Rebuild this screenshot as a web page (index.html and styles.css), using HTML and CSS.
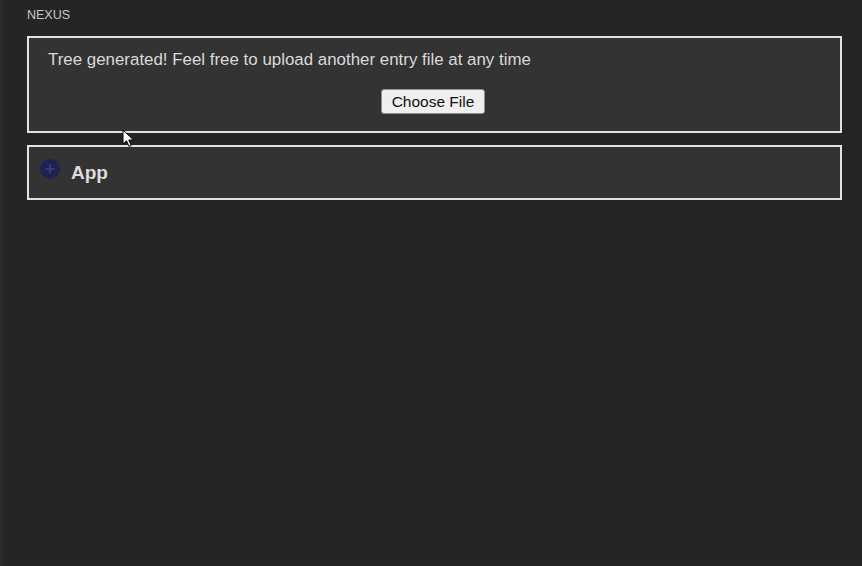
FILE: index.html
```html
<!DOCTYPE html>
<html>
<head>
<meta charset="utf-8">
<link rel="stylesheet" href="styles.css">
</head>
<body>
<div class="stripe"></div>
<main class="main">
  <div class="title">NEXUS</div>
  <section class="upload">
    <p class="msg">Tree generated! Feel free to upload another entry file at any time</p>
    <div class="btn-row"><button class="file-btn">Choose File</button></div>
  </section>
  <section class="node">
    <svg class="plus" width="20" height="20" viewBox="0 0 20 20">
      <circle cx="10" cy="10" r="10" fill="#1c2254"/>
      <path d="M10 5.5v9M5.5 10h9" stroke="#3d4474" stroke-width="1.6"/>
    </svg>
    <span class="node-name">App</span>
  </section>
</main>
<svg class="cursor" width="14" height="20" viewBox="0 0 14 20">
  <path d="M1 1 L1 15 L4.5 11.8 L7 17.5 L9.2 16.5 L6.8 11 L11.5 11 Z" fill="#fff" stroke="#000" stroke-width="1"/>
</svg>
</body>
</html>
```
FILE: styles.css
```css
html, body {
  margin: 0;
  padding: 0;
  height: 100%;
}
body {
  background: #252525;
  display: flex;
  font-family: "Liberation Sans", Arial, sans-serif;
  overflow: hidden;
  position: relative;
}
.stripe {
  width: 3px;
  background: #2d2d2d;
  flex: none;
}
.main {
  flex: 1;
  padding: 8px 20px 0 24px;
  display: flex;
  flex-direction: column;
}
.title {
  font-size: 12.5px;
  line-height: 15px;
  color: #c8c8c8;
  margin-bottom: 13px;
}
.upload {
  box-sizing: border-box;
  height: 97px;
  border: 2px solid #e2e2e2;
  background: #333333;
  padding: 12px 19px 16px;
}
.msg {
  margin: 0;
  font-size: 16.9px;
  line-height: 20px;
  color: #dadada;
}
.btn-row {
  display: flex;
  justify-content: center;
  margin-top: 19px;
  padding-right: 3px;
}
.file-btn {
  height: 25px;
  width: 104px;
  padding: 0;
  background: #efefef;
  border: 1px solid #8f8f8f;
  border-radius: 3px;
  font-family: "Liberation Sans", Arial, sans-serif;
  font-size: 15.5px;
  color: #111;
}
.node {
  box-sizing: border-box;
  height: 55px;
  margin-top: 12px;
  border: 2px solid #e2e2e2;
  background: #333333;
  padding: 12px 11px 0;
  display: flex;
  align-items: flex-start;
  gap: 11px;
}
.plus {
  flex: none;
}
.node-name {
  font-size: 19px;
  line-height: 22px;
  font-weight: bold;
  color: #dcdcdc;
  margin-top: 3px;
}
.cursor {
  position: absolute;
  left: 122px;
  top: 129px;
}
```
